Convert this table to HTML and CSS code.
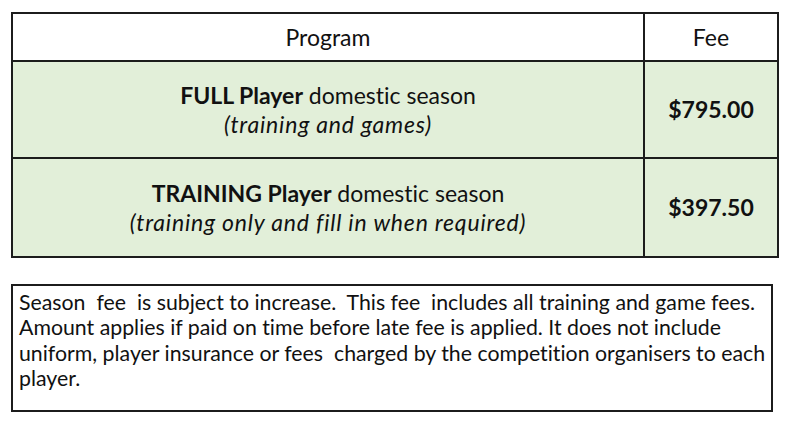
FILE: index.html
```html
<!DOCTYPE html>
<html>
<head>
<meta charset="utf-8">
<link rel="stylesheet" href="styles.css">
</head>
<body>
<div class="page">
  <table class="fees">
    <thead>
      <tr class="head-row">
        <th class="col-program">Program</th>
        <th class="col-fee">Fee</th>
      </tr>
    </thead>
    <tbody>
      <tr class="row-a">
        <td class="program"><b>FULL Player</b> domestic season<br><i class="sub">(training and games)</i></td>
        <td class="fee">$795.00</td>
      </tr>
      <tr class="row-b">
        <td class="program"><b>TRAINING Player</b> domestic season<br><i class="sub">(training only and fill in when required)</i></td>
        <td class="fee">$397.50</td>
      </tr>
    </tbody>
  </table>
  <div class="notes">
    <span class="line">Season&nbsp; fee&nbsp; is subject to increase.&nbsp; This fee&nbsp; includes all training and game fees.</span>
    <span class="line">Amount applies if paid on time before late fee is applied. It does not include</span>
    <span class="line">uniform, player insurance or fees&nbsp; charged by the competition organisers to each</span>
    <span class="line">player.</span>
  </div>
</div>
</body>
</html>
```
FILE: styles.css
```css
html, body {
  margin: 0;
  padding: 0;
  background: #ffffff;
}
body {
  font-family: "Lato", "Liberation Sans", sans-serif;
  color: #111111;
}
.page {
  padding: 12px 0 0 11px;
  display: flex;
  flex-direction: column;
  align-items: flex-start;
  gap: 26px;
}
.fees {
  border-collapse: collapse;
  width: 768px;
}
.fees th, .fees td {
  border: 2px solid #1c1c1c;
  text-align: center;
  vertical-align: middle;
  padding: 0;
  font-size: 23px;
  font-variant-ligatures: none;
}
.fees th {
  font-weight: normal;
  height: 46px;
  background: #ffffff;
}
.col-program { width: 630px; }
.fees td {
  background: #e2efd9;
  line-height: 29px;
}
.row-a td { height: 95px; }
.row-b td { height: 97px; }
.sub {
  letter-spacing: 0.8px;
}
.fee {
  font-weight: bold;
}
.notes {
  width: 752px;
  height: 120px;
  border: 2px solid #1c1c1c;
  padding: 4px 0 0 6px;
  font-size: 21.3px;
  line-height: 25.3px;
  display: flex;
  flex-direction: column;
  font-variant-ligatures: none;
}
.line {
  white-space: nowrap;
}
```
